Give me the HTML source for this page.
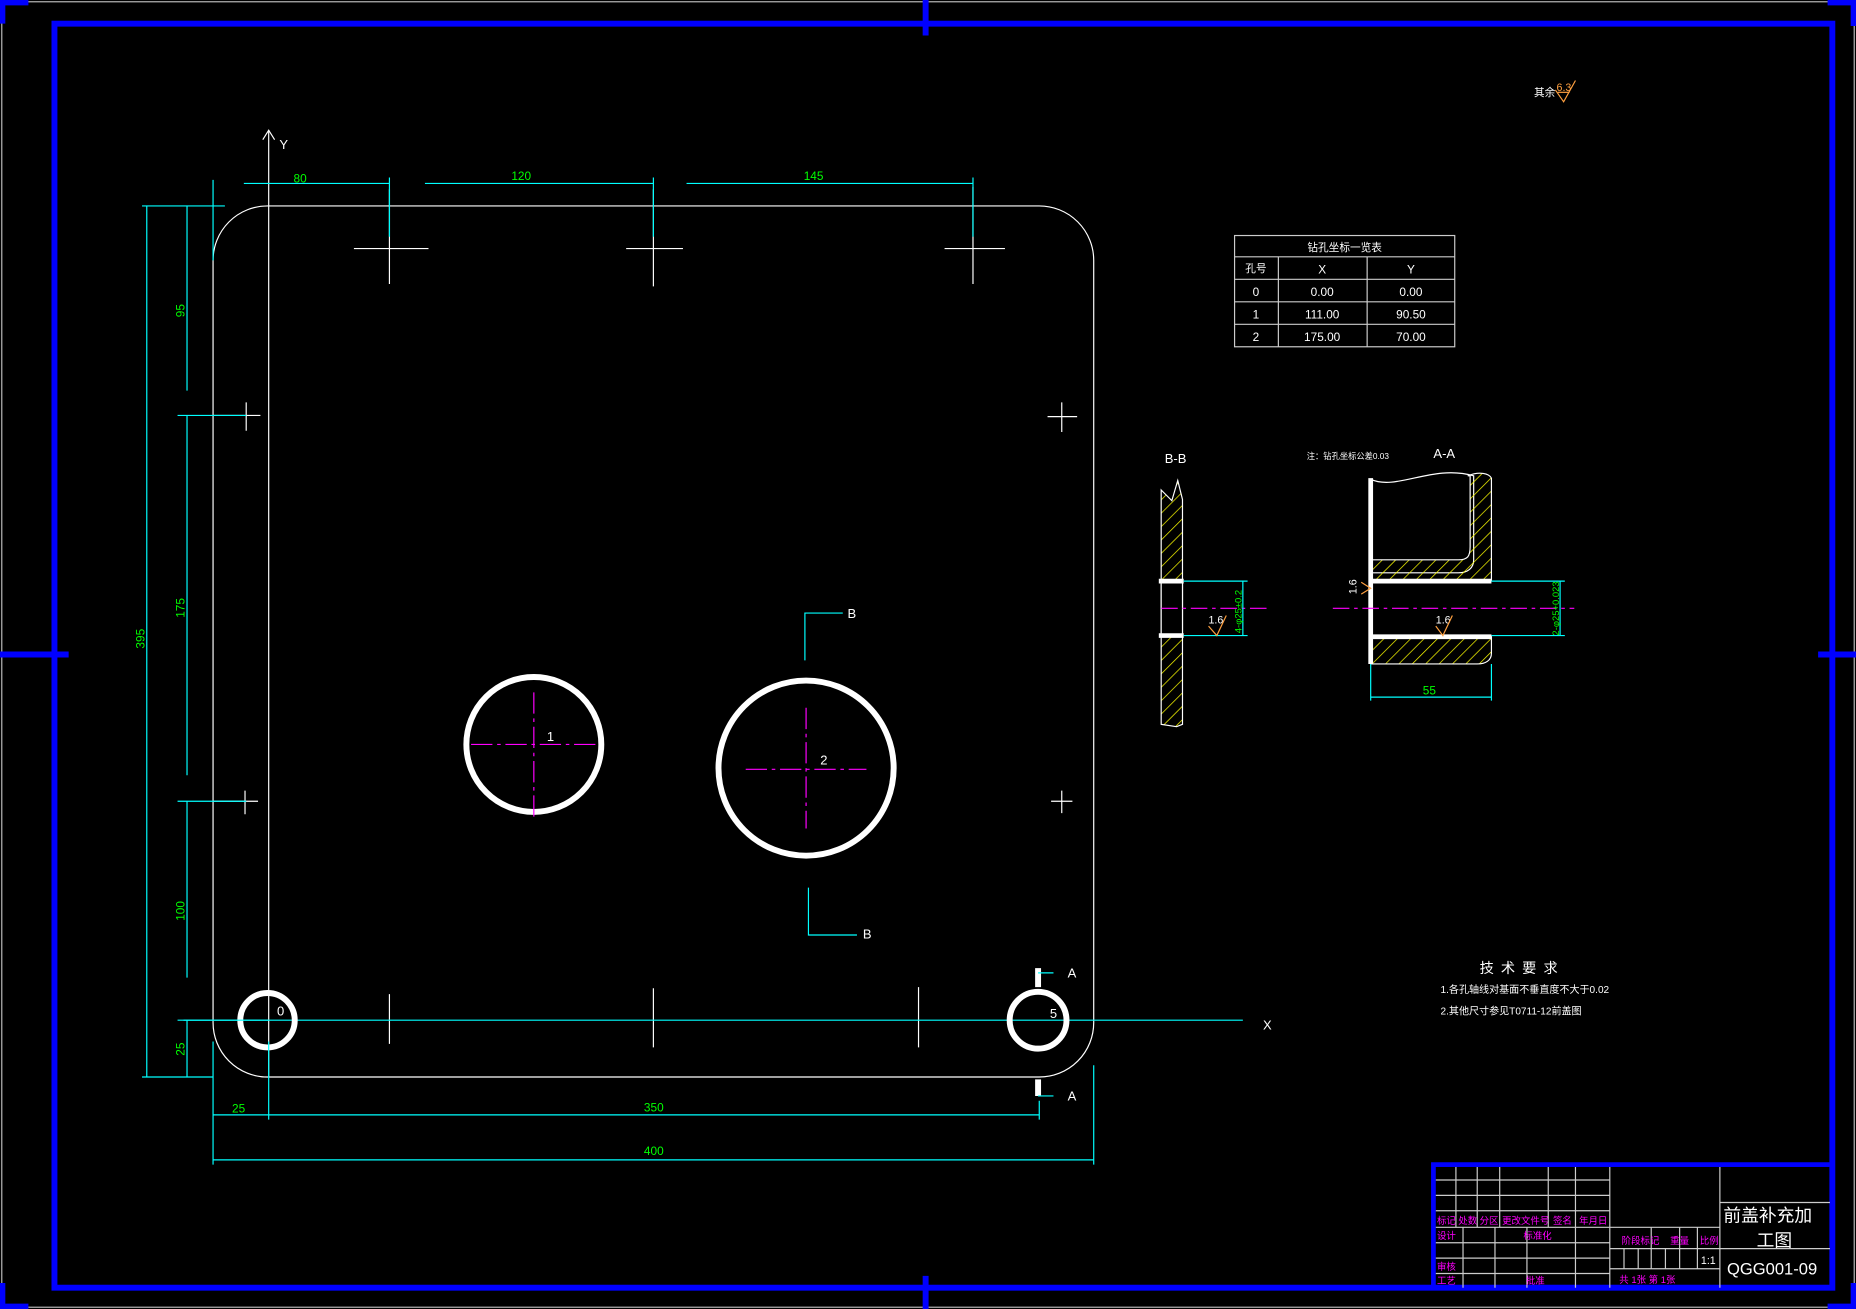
<!DOCTYPE html>
<html><head><meta charset="utf-8"><style>
html,body{margin:0;padding:0;background:#000;overflow:hidden}
svg{display:block}
text{font-family:"Liberation Sans","Noto Sans CJK SC",sans-serif}
</style></head><body>
<svg width="1856" height="1309" viewBox="0 0 1568 1106" preserveAspectRatio="none" xmlns="http://www.w3.org/2000/svg">
<rect width="1568" height="1106" fill="#000"/>
<rect x="1.5" y="1.5" width="1565" height="1103" fill="none" stroke="#bbb" stroke-width="1"/>
<rect x="46" y="20" width="1502" height="1068" fill="none" stroke="#0000ff" stroke-width="5"/>
<g stroke="#0000ff" stroke-width="5" fill="none">
<path d="M782 0V30M782 1078V1106M0 553H58M1536 553H1568"/>
<path d="M2 20V2H24M1544 2H1566V22M2 1084V1104H24M1544 1104H1566V1084"/>
</g>
<g fill="none" stroke="#fff" stroke-width="1">
<rect x="180" y="174" width="744" height="736" rx="46"/>
<path d="M227 110V910"/>
<path d="M222 118L227 110L232 118"/>
<path d="M299 210H362M329 160V240M529 210H577M552 160V242M798 210H849M822 158V240"/>
<path d="M180 351H220M208 340V364M180 677H218M207 668V688M885 352H910M897 340V365M888 677H906M897 668V687"/>
<path d="M329 840V882M552 835V885M776 834V885"/>
</g>
<text x="236" y="126" fill="#fff" font-size="11">Y</text>
<text x="1067" y="870" fill="#fff" font-size="11">X</text>
<path d="M155 862H1050" stroke="#00ffff" stroke-width="1"/>
<g fill="none" stroke="#fff" stroke-width="5">
<circle cx="451" cy="629" r="57"/>
<circle cx="681" cy="649" r="74"/>
<circle cx="226" cy="862" r="23"/>
<circle cx="877" cy="862" r="24"/>
<path d="M877 818V834M877 912V926"/>
</g>
<g stroke="#ff00ff" stroke-width="1" stroke-dasharray="18 4 3 4">
<path d="M398 629H505M451 585V690M630 650H732M681 598V700"/>
</g>
<g fill="#fff" font-size="11">
<text x="462" y="626">1</text><text x="693" y="646">2</text><text x="234" y="858">0</text><text x="887" y="860">5</text>
<text x="716" y="522">B</text><text x="729" y="793">B</text><text x="902" y="826">A</text><text x="902" y="930">A</text>
</g>
<g fill="none" stroke="#00ffff" stroke-width="1">
<path d="M680 558V518H712M683 750V790H724M877 822H890M877 926H890"/>
<path d="M206 155H329M359 155H552M580 155H822M329 150V200M552 150V200M822 150V200M180 152V220"/>
<path d="M120 174H190M120 910H180M150 351H208M150 677H208M150 862H227"/>
<path d="M124 174V910M158 174V330M158 351V655M158 677V826M158 862V910"/>
<path d="M180 942H878M180 980H924M180 880V984M227 880V946M878 930V946M924 900V984"/>
</g>
<g fill="#00ff00" font-size="10">
<text x="248" y="154">80</text><text x="432" y="152">120</text><text x="679" y="152">145</text>
<text x="196" y="940">25</text><text x="544" y="939">350</text><text x="544" y="976">400</text>
<text transform="translate(122,548) rotate(-90)">395</text>
<text transform="translate(156,268) rotate(-90)">95</text>
<text transform="translate(156,522) rotate(-90)">175</text>
<text transform="translate(156,778) rotate(-90)">100</text>
<text transform="translate(156,892) rotate(-90)">25</text>
</g>
<text x="1296" y="81" fill="#fff" font-size="9">其余</text>
<text x="1315" y="77" fill="#ffa040" font-size="9">6.3</text>
<path d="M1314 76L1321 86L1331 68" fill="none" stroke="#ffa040"/>
<path d="M1316 78H1326" stroke="#ffa040"/>
<g fill="none" stroke="#ccc" stroke-width="1">
<rect x="1043" y="199" width="186" height="94"/>
<path d="M1043 217H1229M1043 236H1229M1043 255H1229M1043 274H1229M1080 217V293M1155 217V293"/>
</g>
<g fill="#fff" font-size="10" text-anchor="middle">
<text x="1136" y="212" font-size="9">钻孔坐标一览表</text>
<text x="1061" y="230" font-size="9">孔号</text><text x="1117" y="231">X</text><text x="1192" y="231">Y</text>
<text x="1061" y="250">0</text><text x="1117" y="250">0.00</text><text x="1192" y="250">0.00</text>
<text x="1061" y="269">1</text><text x="1117" y="269">111.00</text><text x="1192" y="269">90.50</text>
<text x="1061" y="288">2</text><text x="1117" y="288">175.00</text><text x="1192" y="288">70.00</text>
</g>
<defs><pattern id="h" width="8" height="8" patternUnits="userSpaceOnUse" patternTransform="rotate(45)"><path d="M0 0V8" stroke="#ffff00" stroke-width="1.2"/></pattern></defs>
<text x="984" y="391" fill="#fff" font-size="11">B-B</text>
<text x="1211" y="387" fill="#fff" font-size="11">A-A</text>
<text x="1104" y="388" fill="#fff" font-size="7">注：钻孔坐标公差0.03</text>
<g stroke="#fff" stroke-width="1">
<path d="M981 414L990 423L995 406L999 422V612L994 614L981 612Z" fill="url(#h)"/>
<path d="M1158 405C1180 415 1210 392 1245 402V473C1245 480 1240 484 1232 484H1158Z" fill="none"/>
<path d="M1240 402C1250 398 1258 400 1260 404V490H1158V473H1232C1240 473 1242 470 1242 462V402Z" fill="url(#h)"/>
<path d="M1158 538H1260V552C1260 558 1255 561 1248 561H1158Z" fill="url(#h)"/>
<rect x="981" y="491" width="18" height="46" fill="#000"/>
</g>
<g stroke="#fff" stroke-width="4" fill="none">
<path d="M979 491H1000M979 537H1000M1158 404V561M1158 491H1260M1158 538H1260"/>
</g>
<g stroke="#ff00ff" stroke-dasharray="14 4 3 4"><path d="M981 514H1074M1126 514H1330"/></g>
<g stroke="#00ffff" fill="none">
<path d="M1000 491H1054M1000 537H1054M1050 491V537M1260 491H1322M1260 537H1322M1318 491V537M1158 561V592M1260 561V592M1158 589H1260"/>
</g>
<g fill="#00ff00" font-size="8">
<text transform="translate(1049,535) rotate(-90)">4-φ25±0.2</text>
<text transform="translate(1317,537) rotate(-90)">2-φ25+0.023</text>
<text x="1202" y="587" font-size="10">55</text>
</g>
<g fill="#fff" font-size="9"><text x="1021" y="527">1.6</text><text x="1213" y="527">1.6</text><text transform="translate(1146,502) rotate(-90)">1.6</text></g>
<g stroke="#ffa040" fill="none"><path d="M1021 529L1028 537L1036 520M1213 529L1219 537L1227 520M1150 492L1158 497L1150 502"/></g>
<text x="1250" y="822" fill="#fff" font-size="12" letter-spacing="6">技术要求</text>
<text x="1217" y="839" fill="#fff" font-size="8.5">1.各孔轴线对基面不垂直度不大于0.02</text>
<text x="1217" y="857" fill="#fff" font-size="8.5">2.其他尺寸参见T0711-12前盖图</text>
<rect x="1211" y="984" width="337" height="104" fill="none" stroke="#0000ff" stroke-width="4"/>
<g stroke="#ccc" stroke-width="1" fill="none">
<path d="M1213 997H1360M1213 1010H1360M1213 1023H1360M1213 1037H1453M1213 1050H1360M1213 1063H1360M1213 1076H1360"/>
<path d="M1230 986V1037M1248 986V1037M1267 986V1037M1308 986V1037M1331 986V1088M1360 986V1088M1236 1037V1088M1263 1037V1088M1290 1037V1088"/>
<path d="M1360 1055H1453M1360 1072H1453M1395 1037V1072M1419 1037V1072M1434 1037V1072M1372 1055V1072M1384 1055V1072M1407 1055V1072"/>
<path d="M1453 986V1088M1453 1016H1546M1453 1055H1546"/>
</g>
<g fill="#ff00ff" font-size="8">
<text x="1214" y="1034">标记</text><text x="1232" y="1034">处数</text><text x="1250" y="1034">分区</text><text x="1269" y="1034">更改文件号</text><text x="1312" y="1034">签名</text><text x="1334" y="1034">年月日</text>
<text x="1214" y="1047">设计</text><text x="1287" y="1047">标准化</text><text x="1214" y="1073">审核</text><text x="1214" y="1085">工艺</text><text x="1289" y="1085">批准</text>
<text x="1370" y="1051">阶段标记</text><text x="1411" y="1051">重量</text><text x="1436" y="1051">比例</text>
<text x="1368" y="1084">共 1张 第 1张</text>
</g>
<text x="1437" y="1068" fill="#fff" font-size="9">1:1</text>
<text x="1456" y="1032" fill="#fff" font-size="15" font-family="Liberation Serif,Noto Serif CJK SC,serif">前盖补充加</text>
<text x="1484" y="1053" fill="#fff" font-size="15" font-family="Liberation Serif,Noto Serif CJK SC,serif">工图</text>
<text x="1459" y="1077" fill="#fff" font-size="14" font-family="Liberation Serif,serif">QGG001-09</text>
</svg>
</body></html>
